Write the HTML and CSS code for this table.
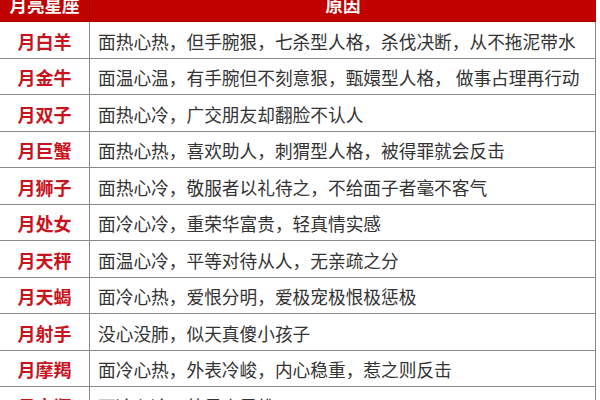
FILE: index.html
```html
<!DOCTYPE html>
<html lang="zh">
<head>
<meta charset="utf-8">
<link rel="stylesheet" href="styles.css">
</head>
<body>
<div class="table">
  <div class="head name"><span>月亮星座</span></div>
  <div class="head reason"><span>原因</span></div>

  <div class="cell name">月白羊</div>
  <div class="cell reason">面热心热，但手腕狠，七杀型人格，杀伐决断，从不拖泥带水</div>

  <div class="cell name">月金牛</div>
  <div class="cell reason">面温心温，有手腕但不刻意狠，甄嬛型人格，&nbsp;做事占理再行动</div>

  <div class="cell name">月双子</div>
  <div class="cell reason">面热心冷，广交朋友却翻脸不认人</div>

  <div class="cell name">月巨蟹</div>
  <div class="cell reason">面热心热，喜欢助人，刺猬型人格，被得罪就会反击</div>

  <div class="cell name">月狮子</div>
  <div class="cell reason">面热心冷，敬服者以礼待之，不给面子者毫不客气</div>

  <div class="cell name">月处女</div>
  <div class="cell reason">面冷心冷，重荣华富贵，轻真情实感</div>

  <div class="cell name">月天秤</div>
  <div class="cell reason">面温心冷，平等对待从人，无亲疏之分</div>

  <div class="cell name">月天蝎</div>
  <div class="cell reason">面冷心热，爱恨分明，爱极宠极恨极惩极</div>

  <div class="cell name">月射手</div>
  <div class="cell reason">没心没肺，似天真傻小孩子</div>

  <div class="cell name">月摩羯</div>
  <div class="cell reason">面冷心热，外表冷峻，内心稳重，惹之则反击</div>

  <div class="cell name">月水瓶</div>
  <div class="cell reason">面冷心冷，外星人思维</div>
</div>
</body>
</html>
```
FILE: styles.css
```css
html, body {
  margin: 0;
  padding: 0;
  background: #ffffff;
}

body {
  width: 600px;
  height: 400px;
  overflow: hidden;
  font-family: "Noto Sans CJK SC", "Noto Sans", sans-serif;
}

.table {
  display: grid;
  grid-template-columns: 90px 506px;
  width: 596px;
}

.head {
  height: 22px;
  box-sizing: border-box;
  background: #c10000;
  color: #ffffff;
  font-weight: 700;
  font-size: 17.5px;
  display: flex;
  align-items: center;
  justify-content: center;
  padding-bottom: 12px;
  overflow: hidden;
  border-bottom: 1px solid #a00000;
}

.head span {
  line-height: 22px;
  white-space: nowrap;
}

.head.name {
  border-right: 1px solid #8c0000;
}

.cell {
  height: 36.5px;
  box-sizing: border-box;
  border-bottom: 1px solid #8a8a8a;
  display: flex;
  align-items: center;
  white-space: nowrap;
  overflow: hidden;
}

.cell.name {
  justify-content: center;
  border-right: 1px solid #8a8a8a;
  color: #c8141e;
  font-weight: 700;
  font-size: 18px;
  padding-top: 2px;
}

.cell.reason {
  border-right: 1px solid #8a8a8a;
  color: #333333;
  font-size: 17.7px;
  padding-left: 8px;
  padding-top: 2px;
}
```
